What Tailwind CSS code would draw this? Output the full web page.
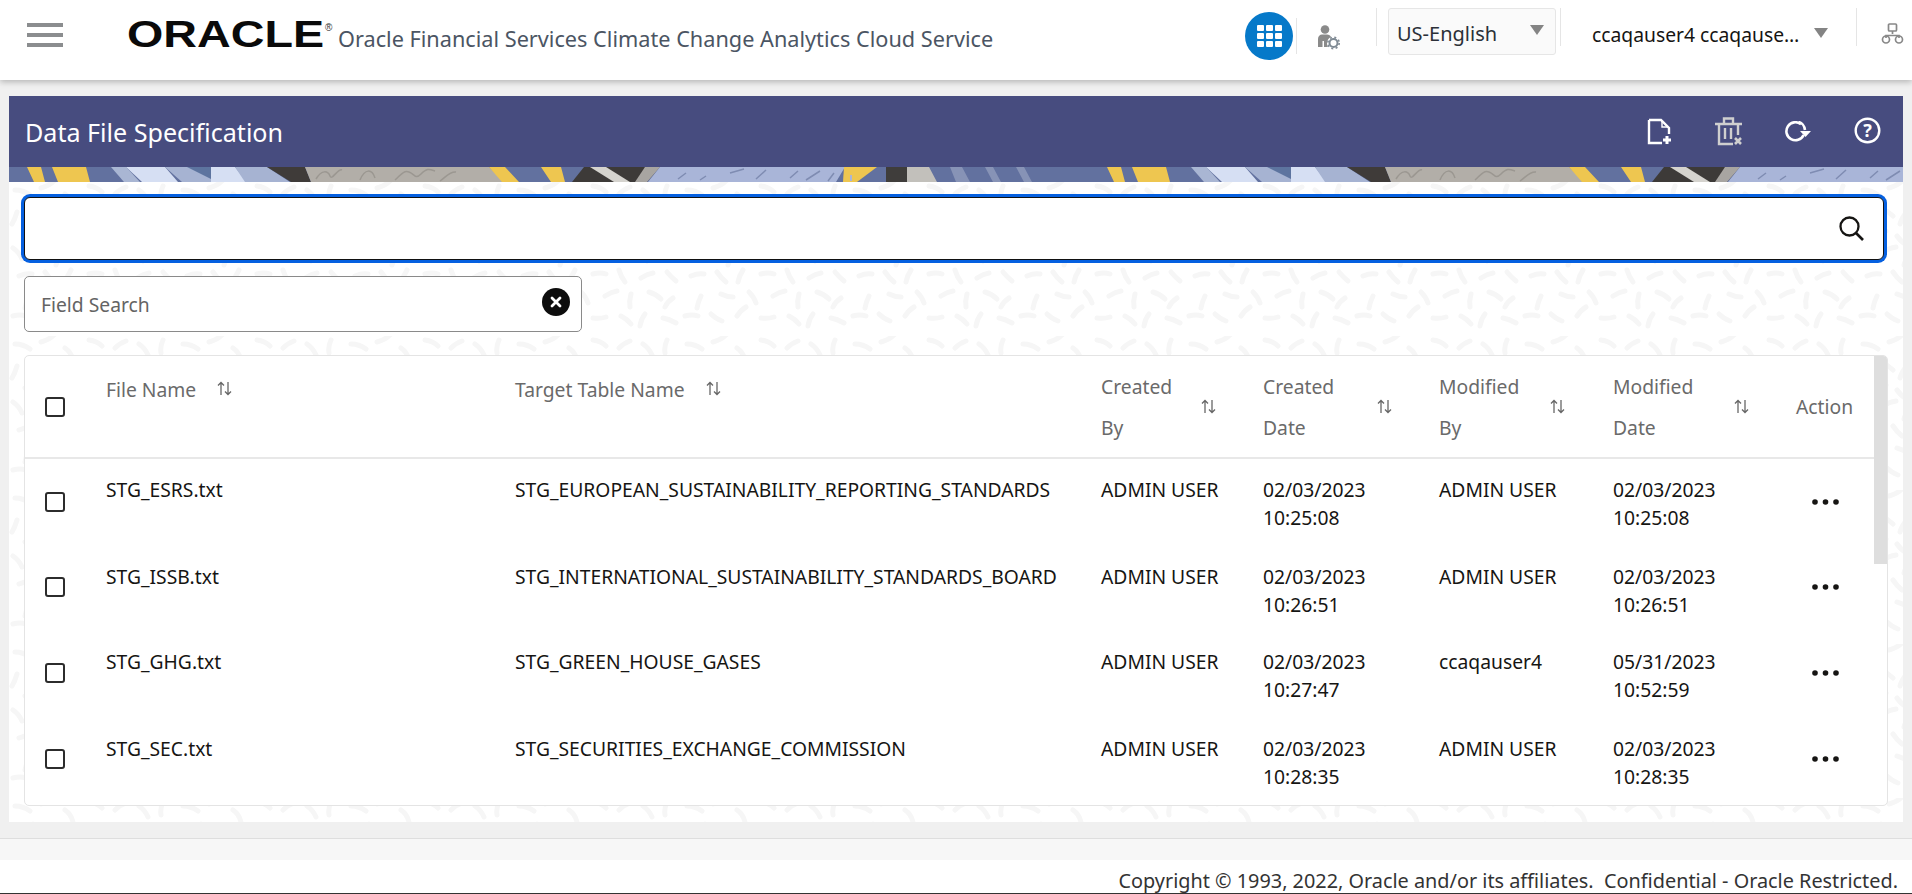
<!DOCTYPE html>
<html lang="en">

<head>
    <meta charset="UTF-8">
    <meta name="viewport" content="width=device-width, initial-scale=1.0">
    <title>Data File Specification</title>
    <script src="https://cdn.jsdelivr.net/npm/@tailwindcss/browser@4"></script>
</head>

<body class="h-[894px] overflow-hidden bg-[#f0f0f0] font-['Noto_Sans',sans-serif] text-[#161513]">
    <svg class="hidden">
        <symbol id="sort" viewBox="0 0 15 15">
            <path d="M4 14V1.5M1 4.500l3-3 3 3M11 1v12.500M8 10.500l3 3 3-3" fill="none" stroke="#666" stroke-width="1.300" />
        </symbol>
        <symbol id="dots" viewBox="0 0 27 6">
            <circle cx="3" cy="3" r="2.800" fill="#161513" />
            <circle cx="13.500" cy="3" r="2.800" fill="#161513" />
            <circle cx="24" cy="3" r="2.800" fill="#161513" />
        </symbol>
    </svg>

    <!-- top bar -->
    <header class="relative z-10 flex h-20 items-start bg-white shadow-[0_2px_6px_rgba(0,0,0,0.25)]">
        <div class="ml-[27px] mt-[23px] flex w-9 flex-col gap-[6px]">
            <span class="h-1 bg-[#8b8d8f]"></span>
            <span class="h-1 bg-[#8b8d8f]"></span>
            <span class="h-1 bg-[#8b8d8f]"></span>
        </div>
        <svg class="ml-[64px] mt-[18px]" width="206" height="44" viewBox="0 0 206 44">
            <text x="0" y="29" font-family="Liberation Sans" font-weight="700" font-size="36" textLength="197" lengthAdjust="spacingAndGlyphs" fill="#0a0a0a">ORACLE</text>
            <text x="198" y="13" font-family="Liberation Sans" font-size="10" fill="#333">®</text>
        </svg>
        <div class="ml-[5px] mt-[24px] text-[21.700px] leading-[30px] text-[#4b5563] whitespace-nowrap">Oracle Financial Services Climate Change Analytics Cloud Service</div>

        <div class="ml-auto flex items-start">
            <div class="mt-3 flex size-12 items-center justify-center rounded-full bg-[#0679c9]">
                <div class="grid grid-cols-3 gap-[2px]">
                    <span class="h-[6px] w-[7px] rounded-[1px] bg-white"></span><span class="h-[6px] w-[7px] rounded-[1px] bg-white"></span><span class="h-[6px] w-[7px] rounded-[1px] bg-white"></span>
                    <span class="h-[6px] w-[7px] rounded-[1px] bg-white"></span><span class="h-[6px] w-[7px] rounded-[1px] bg-white"></span><span class="h-[6px] w-[7px] rounded-[1px] bg-white"></span>
                    <span class="h-[6px] w-[7px] rounded-[1px] bg-white"></span><span class="h-[6px] w-[7px] rounded-[1px] bg-white"></span><span class="h-[6px] w-[7px] rounded-[1px] bg-white"></span>
                </div>
            </div>
            <span class="ml-[3px] mt-[18px] h-9 w-px bg-[#e5e5e5]"></span>
            <svg class="ml-5 mt-[25px]" width="23" height="25" viewBox="0 0 23 25">
                <circle cx="8" cy="4.500" r="4.300" fill="#8a8a8a" />
                <path d="M1 22V14c0-3 2-4.500 4-4.500h5c2 0 3.500 1 4 2.500-2.500 1-4 3.500-4 6 0 1.500.5 3 1 4H7v-6H5.500v6H1z" fill="#8a8a8a" />
                <circle cx="16.500" cy="18" r="4" fill="none" stroke="#7f8a94" stroke-width="2" />
                <circle cx="16.500" cy="18" r="5.700" fill="none" stroke="#7f8a94" stroke-width="1.600" stroke-dasharray="2 2.500" />
            </svg>
            <span class="ml-[36px] mt-2 h-[38px] w-px bg-[#e5e5e5]"></span>
            <div class="ml-[11px] mt-2 flex h-[47px] w-[168px] items-center rounded-[3px] border border-[#e6e6e6] bg-[#fafafa] pl-2">
                <span class="translate-y-0.5 text-[20px] text-[#2b3038]">US-English</span>
                <span class="ml-[33px] -mt-[3px] h-0 w-0 border-x-[7px] border-t-[10px] border-x-transparent border-t-[#848484]"></span>
            </div>
            <span class="ml-1 mt-2 h-[38px] w-px bg-[#e5e5e5]"></span>
            <div class="ml-[31px] mt-[20px] w-[208px] truncate text-[19.300px] leading-[30px] text-[#161513]">ccaqauser4 ccaqauser4</div>
            <span class="ml-[14px] mt-[28px] h-0 w-0 border-x-[7px] border-t-[10px] border-x-transparent border-t-[#848484]"></span>
            <span class="ml-[28px] mt-2 h-[38px] w-px bg-[#e5e5e5]"></span>
            <svg class="ml-[24px] mt-[23px]" width="23" height="21" viewBox="0 0 23 21" fill="none" stroke="#888" stroke-width="1.700">
                <rect x="7.500" y="1" width="8" height="7" rx="1" />
                <path d="M11.500 8v3M5 15v-2.500h13V15" />
                <circle cx="5" cy="16.500" r="3.500" />
                <circle cx="18" cy="16.500" r="3.500" />
            </svg>
            <span class="w-2"></span>
        </div>
    </header>

    <main class="px-[9px] pt-4">
        <!-- title bar -->
        <div class="flex h-[71px] items-center bg-[#474c7f] pl-4">
            <h1 class="translate-y-px text-[25.100px] font-normal text-white">Data File Specification</h1>
            <div class="ml-auto flex items-start">
                <svg class="mt-[1px]" width="25" height="27" viewBox="0 0 25 27" fill="none" stroke="#fff" stroke-width="2.400">
                    <path d="M2 2v23h13M2 2h12l8 8v6" />
                    <path d="M15 3v6h6" stroke-width="1.400" />
                    <path d="M20 18v8M16 22h8" stroke-width="3" />
                </svg>
                <svg class="ml-[43px]" width="28" height="29" viewBox="0 0 28 29" fill="none" stroke="#cfcfcf" stroke-width="2.400">
                    <path d="M0 7h27M9 6V1.500h9V6M4 7v20h14" />
                    <path d="M23 7v11M10 11v11M16 11v11" />
                    <path d="M20 21l6 6M26 21l-6 6" stroke-width="2.600" />
                </svg>
                <svg class="ml-[41px] mt-[4px]" width="27" height="22" viewBox="0 0 27 22" fill="none" stroke="#fff" stroke-width="2.600">
                    <path d="M17 3.200A9 9 0 1 0 19.600 14" />
                    <path d="M14.500 1c3 .5 6 3.500 6.500 8" />
                    <path d="M16 10h11l-5.500 6z" fill="#fff" stroke="none" />
                </svg>
                <svg class="ml-[43px]" width="27" height="27" viewBox="0 0 27 27" fill="none">
                    <circle cx="13.500" cy="13.500" r="11.800" stroke="#fff" stroke-width="2.400" />
                    <text x="13.500" y="20" text-anchor="middle" font-family="Noto Sans" font-weight="700" font-size="18" fill="#fff">?</text>
                </svg>
                <span class="w-[22px]"></span>
            </div>
        </div>

        <!-- banner strip -->
        <div class="h-[15px] overflow-hidden">
            <svg class="block h-[15px] w-full blur-[0.4px]" viewBox="9 0 1894 15" preserveAspectRatio="none">
                <defs>
                    <g id="tile">
                        <rect x="0" y="0" width="1080" height="15" fill="#62719f" />
                        <path d="M27 0h14l4 15H34zM52 0h34l4 15H58z" fill="#eec650" />
                        <path d="M111 0h15l14 15h-16z" fill="#a9b6d3" />
                        <path d="M126 0h39l13 15h-36z" fill="#d6dff3" />
                        <path d="M165 0h46v15h-29z" fill="#a6b3d2" />
                        <path d="M187 0h24v12z" fill="#5d749f" />
                        <path d="M211 0h24l12 15h-36z" fill="#d6dff3" />
                        <path d="M235 0h32l23 15h-45z" fill="#a6b3d2" />
                        <path d="M267 0h38l6 15h-20z" fill="#3f3b39" />
                        <path d="M305 0h184l15 15H311z" fill="#b2aea8" />
                        <path d="M316 12c6-10 12-8 14-3s8-8 12-6M360 13c5-12 12-11 15-2M395 13c5-4 8-10 14-8s6 8 12 2 8-5 14-3M440 14c6-4 10-10 16-9" fill="none" stroke="#9b9791" stroke-width="1.500" />
                        <path d="M489 0h16l14 15h-17zM541 0h20l4 15h-14z" fill="#eec650" />
                        <path d="M584 0h76l-13 15h-75z" fill="#3d3a38" />
                        <path d="M590 0h16l24 15h-16z" fill="#d5d3ce" />
                        <path d="M645 0h15l-13 15h-12z" fill="#d5d3ce" opacity="0.700" />
                        <path d="M660 0h185l-9 15H648z" fill="#a9b5d8" />
                        <path d="M678 12l8-6M700 13l6-4M730 6l14-4M756 12l10-9M790 11l8-7M806 13l14-9M828 14l6-8" stroke="#7f8cb2" stroke-width="1.500" />
                        <path d="M844 0h33l-20 15h-14z" fill="#eec650" />
                        <path d="M851 8v6" stroke="#a9b5d8" stroke-width="2" />
                        <path d="M886 0h21v15h-21z" fill="#3f3d3b" />
                        <path d="M907 0h22l8 15h-30z" fill="#c2c0bb" />
                        <path d="M950 0h12l8 15h-14zM985 0h8l8 15h-8zM1016 0h8l8 15h-8z" fill="#8793b6" />
                    </g>
                </defs>
                <use href="#tile" />
                <use href="#tile" x="1080" />
            </svg>
        </div>

        <!-- content -->
        <section class="relative h-[640px] overflow-hidden bg-white pl-[15px]">
            <svg class="absolute inset-0 h-full w-full" aria-hidden="true">
                <defs>
                    <pattern id="rice" width="168" height="154" patternUnits="userSpaceOnUse">
                        <g fill="none" stroke="#f6f6f6" stroke-width="5" stroke-linecap="round">
                            <path d="M6 8q8 0 15 5M32 6q8-2 13-7M56 12q6 4 8 12M80 4q8 1 13 6M106 12q5-5 11-7M130 8q6 4 9 11M154 4q-3 6-2 13" />
                            <path d="M8 30q-2 7-5 12M24 26q7 3 12 8M50 30q-5 5-7 12M74 28q7-2 13-1M100 30q3 6 8 10M124 28q-5 4-8 11M146 30q7 2 13 6" />
                            <path d="M16 52q7-3 13-3M40 54q4 6 10 9M66 46q-2 7-2 13M84 48q7 1 13 5M112 54q6-2 11-6M134 48q2 7 6 12M158 50q-4 5-5 12" />
                            <path d="M4 66q6 4 9 11M26 70q6-4 13-5M54 72q-5 4-7 11M76 68q6 3 12 4M102 70q3-6 8-10M122 72q7 2 12 7M148 74q5-5 12-6" />
                            <path d="M10 94q7-3 13-2M36 90q4 6 9 10M62 88q-4 6-5 12M80 92q7-2 13 0M106 88q2 7 6 12M128 96q6-4 12-5M154 90q4 5 9 9" />
                            <path d="M20 114q-3 6-4 12M40 112q6 3 12 3M68 110q5 5 7 11M92 114q6-4 12-5M118 112q-2 7-1 13M136 110q7 2 12 7M160 116q-5 3-8 9" />
                            <path d="M4 134q7-2 13 0M30 132q5 5 11 7M56 134q4-6 9-9M80 136q7 1 13-1M108 134q6 3 10 8M132 132q-4 5-5 12M150 136q6 1 13 5" />
                        </g>
                    </pattern>
                </defs>
                <rect width="100%" height="100%" fill="url(#rice)" />
            </svg>

            <div class="relative">
                <div class="mt-[15px] flex h-[63px] w-[1860px] items-center justify-end rounded-[6px] border border-[#111] bg-white pr-[19px] ring-[3px] ring-[#0560e0]">
                    <svg width="25" height="25" viewBox="0 0 25 25" fill="none" stroke="#161513" stroke-width="2.300">
                        <circle cx="10.500" cy="10.500" r="9" />
                        <path d="M17 17l7 7" stroke-width="2.700" />
                    </svg>
                </div>

                <div class="mt-4 flex h-[56px] w-[558px] items-center rounded-[5px] border border-[#8a8a8a] bg-white pl-4 pr-[11px]">
                    <span class="translate-y-px text-[19.300px] text-[#646464]">Field Search</span>
                    <span class="ml-auto flex size-7 -translate-y-0.5 items-center justify-center rounded-full bg-[#0d0d0d]">
                        <svg width="12" height="12" viewBox="0 0 12 12" stroke="#fff" stroke-width="2.800" stroke-linecap="round"><path d="M2 2l8 8M10 2l-8 8" /></svg>
                    </span>
                </div>

                <!-- table card -->
                <div class="relative mt-[23px] h-[451px] w-[1864px] overflow-hidden rounded-[5px] border border-[#e4e4e4] bg-white">
                    <div class="absolute right-0 top-0 h-[208px] w-[13px] bg-[#dedede]"></div>
                    <table class="w-[1862px] table-fixed border-collapse text-left text-[19.300px] leading-[28px]">
                        <colgroup>
                            <col class="w-[81px]"><col class="w-[409px]"><col class="w-[586px]"><col class="w-[162px]"><col class="w-[176px]"><col class="w-[174px]"><col class="w-[183px]"><col class="w-[91px]">
                        </colgroup>
                        <thead>
                            <tr class="h-[102px] border-b-2 border-[#e8e8e8] text-[#6a6a6a]">
                                <th class="align-middle font-normal"><input type="checkbox" class="ml-5 block size-5 appearance-none rounded-[3px] border-2 border-[#2c2c2c]"></th>
                                <th class="align-top pt-[20px] font-normal">
                                    <div class="flex items-center gap-[21px]">File Name <svg class="size-[15px] -translate-y-0.5"><use href="#sort" /></svg></div>
                                </th>
                                <th class="align-top pt-[20px] font-normal">
                                    <div class="flex items-center gap-[21px]">Target Table Name <svg class="size-[15px] -translate-y-0.5"><use href="#sort" /></svg></div>
                                </th>
                                <th class="font-normal leading-[41px]">
                                    <div class="flex w-[115px] items-center justify-between"><span>Created<br>By</span><svg class="size-[15px]"><use href="#sort" /></svg></div>
                                </th>
                                <th class="font-normal leading-[41px]">
                                    <div class="flex w-[129px] items-center justify-between"><span>Created<br>Date</span><svg class="size-[15px]"><use href="#sort" /></svg></div>
                                </th>
                                <th class="font-normal leading-[41px]">
                                    <div class="flex w-[126px] items-center justify-between"><span>Modified<br>By</span><svg class="size-[15px]"><use href="#sort" /></svg></div>
                                </th>
                                <th class="font-normal leading-[41px]">
                                    <div class="flex w-[136px] items-center justify-between"><span>Modified<br>Date</span><svg class="size-[15px]"><use href="#sort" /></svg></div>
                                </th>
                                <th class="font-normal">Action</th>
                            </tr>
                        </thead>
                        <tbody>
                            <tr class="h-[88px] align-top">
                                <td class="pt-[33px]"><input type="checkbox" class="ml-5 block size-5 appearance-none rounded-[3px] border-2 border-[#2c2c2c]"></td>
                                <td class="pt-[17px]">STG_ESRS.txt</td>
                                <td class="pt-[17px]">STG_EUROPEAN_SUSTAINABILITY_REPORTING_STANDARDS</td>
                                <td class="pt-[17px]">ADMIN USER</td>
                                <td class="pt-[17px]">02/03/2023<br>10:25:08</td>
                                <td class="pt-[17px]">ADMIN USER</td>
                                <td class="pt-[17px]">02/03/2023<br>10:25:08</td>
                                <td class="pt-[40px]"><svg class="ml-4 h-[6px] w-[27px]"><use href="#dots" /></svg></td>
                            </tr>
                            <tr class="h-[85px] align-top">
                                <td class="pt-[31px]"><input type="checkbox" class="ml-5 block size-5 appearance-none rounded-[3px] border-2 border-[#2c2c2c]"></td>
                                <td class="pt-[17px]">STG_ISSB.txt</td>
                                <td class="pt-[17px]">STG_INTERNATIONAL_SUSTAINABILITY_STANDARDS_BOARD</td>
                                <td class="pt-[17px]">ADMIN USER</td>
                                <td class="pt-[17px]">02/03/2023<br>10:26:51</td>
                                <td class="pt-[17px]">ADMIN USER</td>
                                <td class="pt-[17px]">02/03/2023<br>10:26:51</td>
                                <td class="pt-[38px]"><svg class="ml-4 h-[6px] w-[27px]"><use href="#dots" /></svg></td>
                            </tr>
                            <tr class="h-[87px] align-top">
                                <td class="pt-[32px]"><input type="checkbox" class="ml-5 block size-5 appearance-none rounded-[3px] border-2 border-[#2c2c2c]"></td>
                                <td class="pt-[17px]">STG_GHG.txt</td>
                                <td class="pt-[17px]">STG_GREEN_HOUSE_GASES</td>
                                <td class="pt-[17px]">ADMIN USER</td>
                                <td class="pt-[17px]">02/03/2023<br>10:27:47</td>
                                <td class="pt-[17px]">ccaqauser4</td>
                                <td class="pt-[17px]">05/31/2023<br>10:52:59</td>
                                <td class="pt-[39px]"><svg class="ml-4 h-[6px] w-[27px]"><use href="#dots" /></svg></td>
                            </tr>
                            <tr class="h-[88px] align-top">
                                <td class="pt-[31px]"><input type="checkbox" class="ml-5 block size-5 appearance-none rounded-[3px] border-2 border-[#2c2c2c]"></td>
                                <td class="pt-[17px]">STG_SEC.txt</td>
                                <td class="pt-[17px]">STG_SECURITIES_EXCHANGE_COMMISSION</td>
                                <td class="pt-[17px]">ADMIN USER</td>
                                <td class="pt-[17px]">02/03/2023<br>10:28:35</td>
                                <td class="pt-[17px]">ADMIN USER</td>
                                <td class="pt-[17px]">02/03/2023<br>10:28:35</td>
                                <td class="pt-[38px]"><svg class="ml-4 h-[6px] w-[27px]"><use href="#dots" /></svg></td>
                            </tr>
                        </tbody>
                    </table>
                </div>
            </div>
        </section>
    </main>

    <footer class="mt-4 border-t border-[#dedede]">
        <div class="h-[21px] bg-[#f7f7f7]"></div>
        <div class="flex h-[34px] items-start justify-end border-b border-[#333] bg-white pr-[14px] text-[19.850px] leading-[41px] whitespace-pre text-[#333]">Copyright © 1993, 2022, Oracle and/or its affiliates.  Confidential - Oracle Restricted.</div>
    </footer>
</body>

</html>
